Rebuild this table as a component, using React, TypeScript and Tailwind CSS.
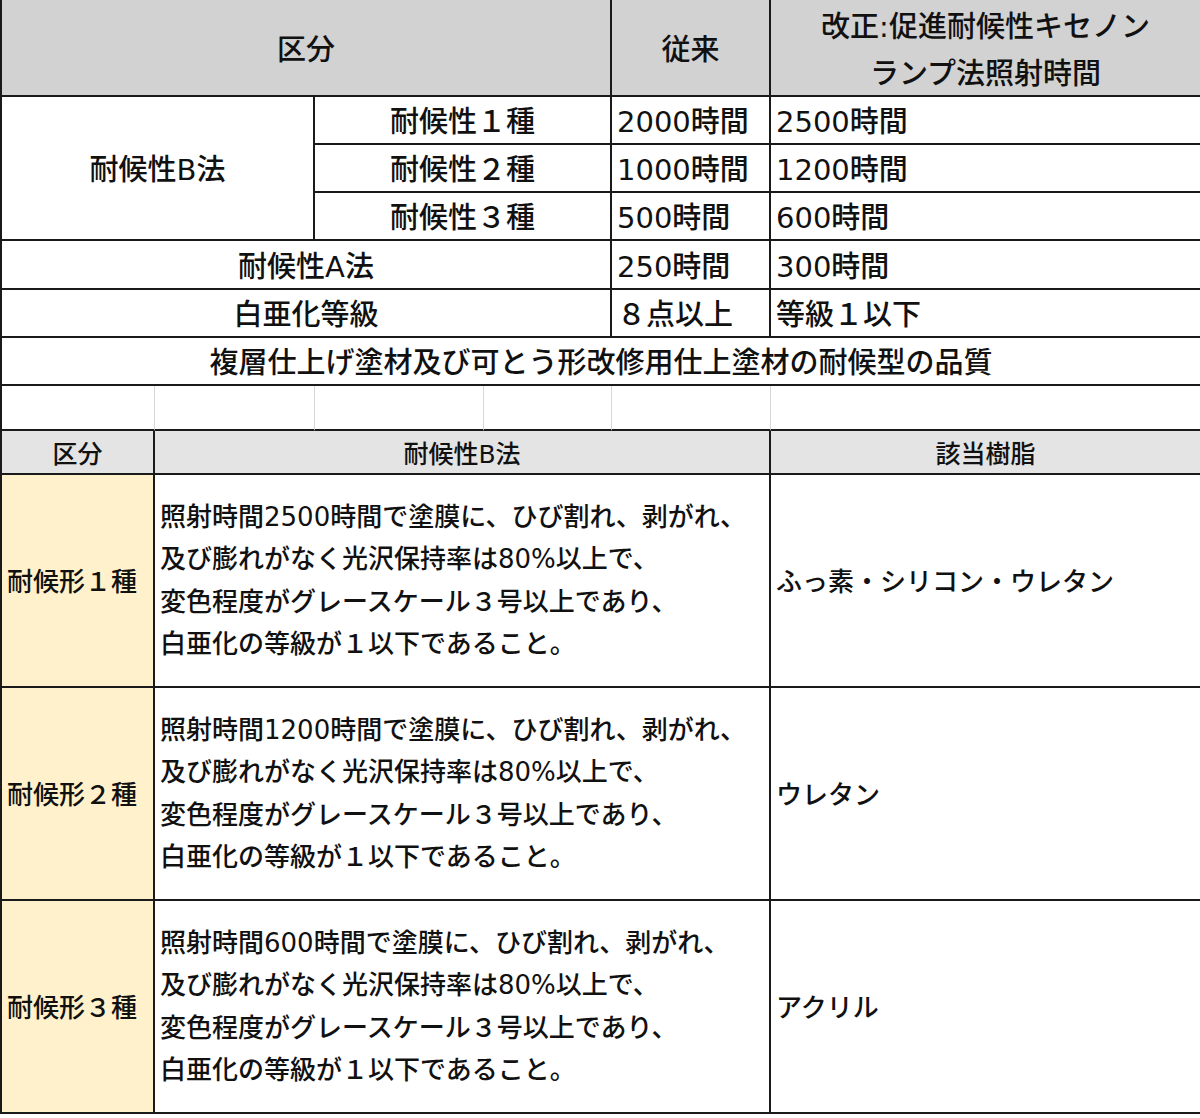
import React from "react";

const topRows = [
  { grade: "耐候性１種", before: "2000時間", after: "2500時間" },
  { grade: "耐候性２種", before: "1000時間", after: "1200時間" },
  { grade: "耐候性３種", before: "500時間", after: "600時間" },
];

const types = [
  { name: "耐候形１種", hours: "2500", resin: "ふっ素・シリコン・ウレタン" },
  { name: "耐候形２種", hours: "1200", resin: "ウレタン" },
  { name: "耐候形３種", hours: "600", resin: "アクリル" },
];

const line = "border-r-2 border-b-2 border-[#1a1a1a]";
const center = `flex items-center justify-center pt-[6px] ${line}`;
const left = `flex items-center justify-start pl-[5px] pt-[6px] ${line}`;
const bodyLeft = `flex items-center justify-start pl-[5px] pt-[3px] ${line}`;
const gap = "border-r border-b-2 border-r-[#d6d6d6] border-b-[#1a1a1a]";

const App = () => {
  return (
    <div className="min-h-[1118px] w-full bg-white font-['DejaVu_Sans','Noto_Sans_CJK_JP',sans-serif] font-medium text-[#111]">
      <div className="grid w-[1200px] grid-cols-[153px_160px_169px_128px_159px_431px] grid-rows-[97px_48px_48px_48px_49px_48px_48px_45px_44px_213px_213px_213px] border-l-2 border-[#1a1a1a] text-[29px]">
        {/* top table header */}
        <div className={`${center} col-span-4 bg-[#d2d2d2]`}>区分</div>
        <div className={`${center} bg-[#d2d2d2]`}>従来</div>
        <div className={`flex flex-col items-center justify-center pt-[6px] ${line} bg-[#d2d2d2] leading-[47px]`}>
          <span>改正:促進耐候性キセノン</span>
          <span>ランプ法照射時間</span>
        </div>

        {/* 耐候性B法 */}
        <div className={`${center} col-span-2 row-span-3`}>耐候性B法</div>
        {topRows.map((r) => (
          <React.Fragment key={r.grade}>
            <div className={`${center} col-span-2`}>{r.grade}</div>
            <div className={left}>{r.before}</div>
            <div className={left}>{r.after}</div>
          </React.Fragment>
        ))}

        <div className={`${center} col-span-4`}>耐候性A法</div>
        <div className={left}>250時間</div>
        <div className={left}>300時間</div>

        <div className={`${center} col-span-4`}>白亜化等級</div>
        <div className={left}>８点以上</div>
        <div className={left}>等級１以下</div>

        <div className={`${center} col-span-6`}>
          複層仕上げ塗材及び可とう形改修用仕上塗材の耐候型の品質
        </div>

        {/* empty spreadsheet row */}
        <div className={gap} />
        <div className={gap} />
        <div className={gap} />
        <div className={gap} />
        <div className={gap} />
        <div className={line} />

        {/* bottom table header */}
        <div className={`${center} bg-[#e4e4e4] text-[25px]`}>区分</div>
        <div className={`${center} col-span-4 bg-[#e4e4e4] text-[25px]`}>耐候性B法</div>
        <div className={`${center} bg-[#e4e4e4] text-[25px]`}>該当樹脂</div>

        {types.map((t) => (
          <React.Fragment key={t.name}>
            <div className={`${bodyLeft} bg-[#fff1cc] text-[26px]`}>{t.name}</div>
            <div className={`flex flex-col items-start justify-center pl-[5px] ${line} col-span-4 text-[26px] leading-[42.5px]`}>
              <span>照射時間{t.hours}時間で塗膜に、ひび割れ、剥がれ、</span>
              <span>及び膨れがなく光沢保持率は80%以上で、</span>
              <span>変色程度がグレースケール３号以上であり、</span>
              <span>白亜化の等級が１以下であること。</span>
            </div>
            <div className={`${bodyLeft} text-[26px]`}>{t.resin}</div>
          </React.Fragment>
        ))}
      </div>
    </div>
  );
};

export default App;
